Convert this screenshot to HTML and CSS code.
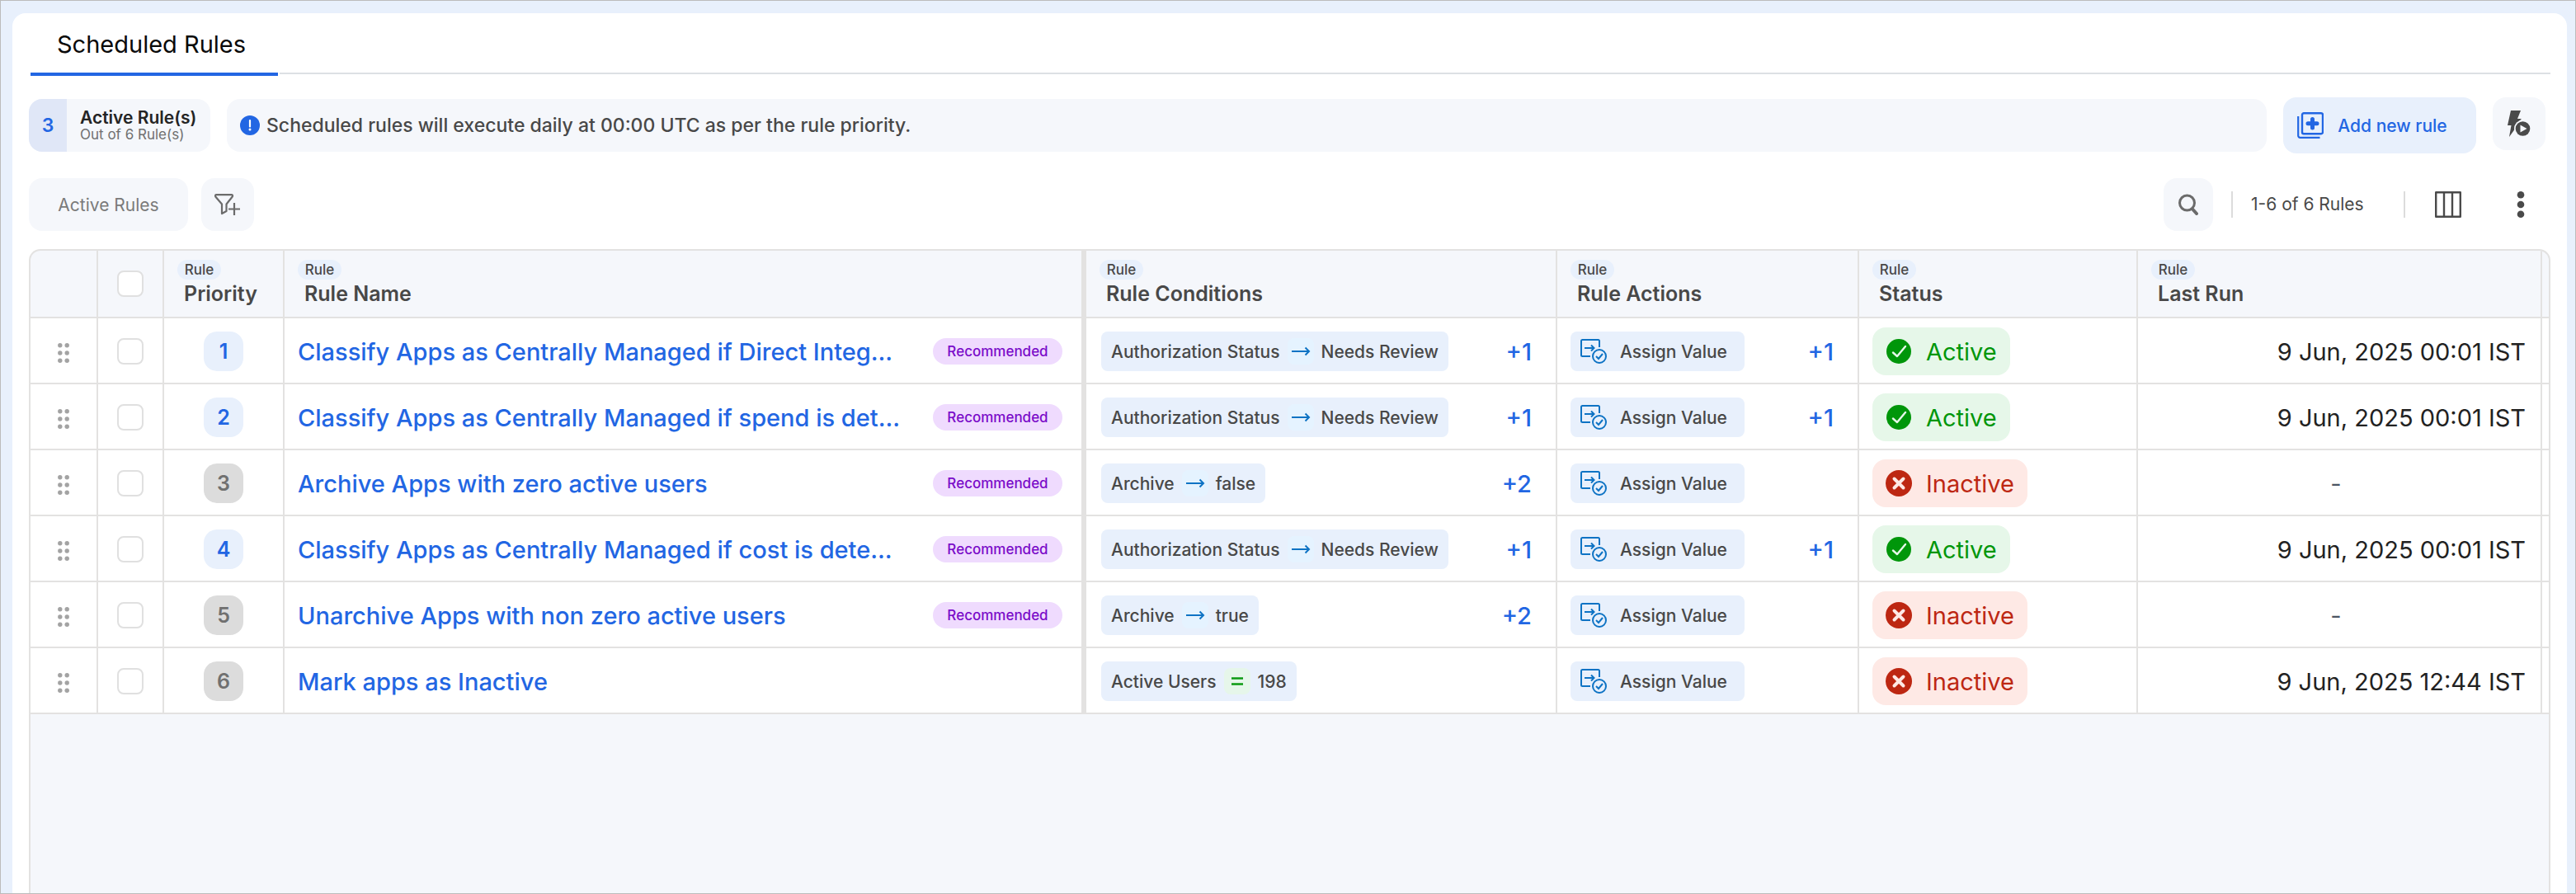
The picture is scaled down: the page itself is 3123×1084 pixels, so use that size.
FILE: index.html
```html
<!DOCTYPE html>
<html lang="en">
<head>
  <meta charset="UTF-8" />
  <meta name="viewport" content="width=device-width, initial-scale=1.0" />
  <title>Scheduled Rules</title>
  <link rel="stylesheet" href="styles.css">
</head>
<body>
<svg class="sprite" aria-hidden="true">
  <symbol id="i-drag" viewBox="0 0 14 24">
    <g fill="#a3a3a3"><circle cx="2.8" cy="2.8" r="2.7"/><circle cx="11.2" cy="2.8" r="2.7"/><circle cx="2.8" cy="12" r="2.7"/><circle cx="11.2" cy="12" r="2.7"/><circle cx="2.8" cy="21.2" r="2.7"/><circle cx="11.2" cy="21.2" r="2.7"/></g>
  </symbol>
  <symbol id="i-arrow" viewBox="0 0 24 24">
    <path d="M1 12H22M17.5 7.5L22 12L17.5 16.5" fill="none" stroke="#0e73c4" stroke-width="2"/>
  </symbol>
  <symbol id="i-equal" viewBox="0 0 24 24">
    <path d="M5 8.5H19M5 15.5H19" fill="none" stroke="#0c9a12" stroke-width="2.4"/>
  </symbol>
  <symbol id="i-assign" viewBox="0 0 32 32">
    <g fill="none" stroke="#0e73c4" stroke-width="2">
      <path d="M23 11V3.5A1.5 1.5 0 0 0 21.5 2H2.5A1.5 1.5 0 0 0 1 3.5V20.5A1.5 1.5 0 0 0 2.5 22H12M5 12H16.5M13 8.5L16.5 12L13 15.5"/>
      <circle cx="23" cy="22" r="8"/>
      <path d="M19 22L22 25L27 19"/>
    </g>
  </symbol>
  <symbol id="i-check" viewBox="0 0 32 32">
    <circle cx="16" cy="16" r="15" fill="#00960a"/>
    <path d="M9 17.5L14 22L24 10" fill="none" stroke="#e6f7e9" stroke-width="2.4" stroke-linecap="round" stroke-linejoin="round"/>
  </symbol>
  <symbol id="i-cross" viewBox="0 0 32 32">
    <circle cx="16" cy="16" r="16" fill="#bd2712"/>
    <path d="M10.5 10.5L21.5 21.5M21.5 10.5L10.5 21.5" fill="none" stroke="#fee9e5" stroke-width="4" stroke-linecap="round"/>
  </symbol>
</svg>

<div class="panel">
  <nav class="tabs">
    <a class="tab" href="#">Scheduled Rules</a>
  </nav>

  <div class="info-row">
    <div class="summary">
      <div class="summary-count">3</div>
      <div class="summary-text">
        <strong>Active Rule(s)</strong>
        <span>Out of 6 Rule(s)</span>
      </div>
    </div>
    <div class="notice">
      <svg width="24" height="24" viewBox="0 0 24 24"><circle cx="12" cy="12" r="12" fill="#2266e3"/><path d="M12 6V13.5" stroke="#fff" stroke-width="2.2" stroke-linecap="round"/><circle cx="12" cy="17" r="1.5" fill="#fff"/></svg>
      <span>Scheduled rules will execute daily at 00:00 UTC as per the rule priority.</span>
    </div>
    <button class="add-button">
      <svg width="32" height="32" viewBox="0 0 32 32"><path d="M1.2 5V28.5A2.3 2.3 0 0 0 3.5 30.8H27.5" fill="none" stroke="#2266e3" stroke-width="2.2"/><rect x="6" y="1.2" width="25" height="25" rx="2" fill="none" stroke="#2266e3" stroke-width="2.4"/><path d="M18.5 8.5V19M13 13.8H24" stroke="#2266e3" stroke-width="5" stroke-linecap="round"/></svg>
      Add new rule
    </button>
    <button class="icon-button" aria-label="Run rules">
      <svg width="28" height="32" viewBox="0 0 28 32"><path d="M4 0H16L12 10H17L11 16L8.5 23L2 32L4.5 18H0Z" fill="#4a4a4a"/><circle cx="18.5" cy="22" r="10.5" fill="#f5f7fb"/><circle cx="18.5" cy="22" r="8.8" fill="#4a4a4a"/><path d="M15.5 17.5L23.5 22L15.5 26.5Z" fill="#f5f7fb"/></svg>
    </button>
  </div>

  <div class="toolbar">
    <button class="filter-chip">Active Rules</button>
    <button class="icon-button" aria-label="Add filter">
      <svg width="32" height="26" viewBox="0 0 32 26"><path d="M2.5 1.2H20.5C22 1.2 22.5 2.5 21.5 3.7L14.5 12.5V21L9 24V12.5L1.5 3.7C.5 2.5 1 1.2 2.5 1.2Z" fill="none" stroke="#6b6b6b" stroke-width="2.2" stroke-linejoin="round"/><path d="M24 11V26M17 18.5H31" stroke="#6b6b6b" stroke-width="2.2"/></svg>
    </button>
    <div class="toolbar-right">
      <button class="icon-button search-button" aria-label="Search">
        <svg width="24" height="26" viewBox="0 0 24 26"><circle cx="10.5" cy="11" r="9" fill="none" stroke="#6b6b6b" stroke-width="3"/><path d="M17 18.5L22 24" stroke="#6b6b6b" stroke-width="4" stroke-linecap="round"/></svg>
      </button>
      <span class="range">1-6 of 6 Rules</span>
      <button class="plain-button" aria-label="Columns">
        <svg width="32" height="32" viewBox="0 0 32 32"><path d="M1.2 1.2H30.8V30.8H1.2ZM11 1V31M21 1V31" fill="none" stroke="#4a4a4a" stroke-width="2.4" stroke-linejoin="round"/></svg>
      </button>
      <button class="plain-button" aria-label="More options">
        <svg width="32" height="32" viewBox="0 0 32 32"><g fill="#4a4a4a"><circle cx="16" cy="4.3" r="4.3"/><circle cx="16" cy="16" r="4.3"/><circle cx="16" cy="27.7" r="4.3"/></g></svg>
      </button>
    </div>
  </div>

  <div class="table-wrap">
    <table>
      <colgroup>
        <col class="col-drag"><col class="col-check"><col class="col-priority"><col class="col-name"><col class="col-conditions"><col class="col-actions"><col class="col-status"><col><col class="col-end">
      </colgroup>
      <thead>
        <tr>
          <th></th>
          <th class="center"><input type="checkbox" aria-label="Select all rules"></th>
          <th><span class="group">Rule</span>Priority</th>
          <th class="pinned"><span class="group">Rule</span>Rule Name</th>
          <th><span class="group">Rule</span>Rule Conditions</th>
          <th><span class="group">Rule</span>Rule Actions</th>
          <th><span class="group">Rule</span>Status</th>
          <th><span class="group">Rule</span>Last Run</th>
          <th></th>
        </tr>
      </thead>
      <tbody>
        <tr>
          <td class="center"><svg class="drag"><use href="#i-drag"/></svg></td>
          <td class="center"><input type="checkbox" aria-label="Select rule 1"></td>
          <td class="center"><span class="priority on">1</span></td>
          <td class="pinned"><div class="cell"><a href="#">Classify Apps as Centrally Managed if Direct Integ...</a><span class="tag">Recommended</span></div></td>
          <td><div class="cell"><span class="chip">Authorization Status <svg class="op"><use href="#i-arrow"/></svg> Needs Review</span><span class="more">+1</span></div></td>
          <td><div class="cell"><span class="chip action"><svg><use href="#i-assign"/></svg>Assign Value</span><span class="more">+1</span></div></td>
          <td><span class="status active"><svg><use href="#i-check"/></svg>Active</span></td>
          <td class="date">9 Jun, 2025 00:01 IST</td>
          <td></td>
        </tr>
        <tr>
          <td class="center"><svg class="drag"><use href="#i-drag"/></svg></td>
          <td class="center"><input type="checkbox" aria-label="Select rule 2"></td>
          <td class="center"><span class="priority on">2</span></td>
          <td class="pinned"><div class="cell"><a href="#">Classify Apps as Centrally Managed if spend is det...</a><span class="tag">Recommended</span></div></td>
          <td><div class="cell"><span class="chip">Authorization Status <svg class="op"><use href="#i-arrow"/></svg> Needs Review</span><span class="more">+1</span></div></td>
          <td><div class="cell"><span class="chip action"><svg><use href="#i-assign"/></svg>Assign Value</span><span class="more">+1</span></div></td>
          <td><span class="status active"><svg><use href="#i-check"/></svg>Active</span></td>
          <td class="date">9 Jun, 2025 00:01 IST</td>
          <td></td>
        </tr>
        <tr>
          <td class="center"><svg class="drag"><use href="#i-drag"/></svg></td>
          <td class="center"><input type="checkbox" aria-label="Select rule 3"></td>
          <td class="center"><span class="priority">3</span></td>
          <td class="pinned"><div class="cell"><a href="#">Archive Apps with zero active users</a><span class="tag">Recommended</span></div></td>
          <td><div class="cell"><span class="chip">Archive <svg class="op"><use href="#i-arrow"/></svg> false</span><span class="more">+2</span></div></td>
          <td><div class="cell"><span class="chip action"><svg><use href="#i-assign"/></svg>Assign Value</span></div></td>
          <td><span class="status inactive"><svg><use href="#i-cross"/></svg>Inactive</span></td>
          <td class="date none">-</td>
          <td></td>
        </tr>
        <tr>
          <td class="center"><svg class="drag"><use href="#i-drag"/></svg></td>
          <td class="center"><input type="checkbox" aria-label="Select rule 4"></td>
          <td class="center"><span class="priority on">4</span></td>
          <td class="pinned"><div class="cell"><a href="#">Classify Apps as Centrally Managed if cost is dete...</a><span class="tag">Recommended</span></div></td>
          <td><div class="cell"><span class="chip">Authorization Status <svg class="op"><use href="#i-arrow"/></svg> Needs Review</span><span class="more">+1</span></div></td>
          <td><div class="cell"><span class="chip action"><svg><use href="#i-assign"/></svg>Assign Value</span><span class="more">+1</span></div></td>
          <td><span class="status active"><svg><use href="#i-check"/></svg>Active</span></td>
          <td class="date">9 Jun, 2025 00:01 IST</td>
          <td></td>
        </tr>
        <tr>
          <td class="center"><svg class="drag"><use href="#i-drag"/></svg></td>
          <td class="center"><input type="checkbox" aria-label="Select rule 5"></td>
          <td class="center"><span class="priority">5</span></td>
          <td class="pinned"><div class="cell"><a href="#">Unarchive Apps with non zero active users</a><span class="tag">Recommended</span></div></td>
          <td><div class="cell"><span class="chip">Archive <svg class="op"><use href="#i-arrow"/></svg> true</span><span class="more">+2</span></div></td>
          <td><div class="cell"><span class="chip action"><svg><use href="#i-assign"/></svg>Assign Value</span></div></td>
          <td><span class="status inactive"><svg><use href="#i-cross"/></svg>Inactive</span></td>
          <td class="date none">-</td>
          <td></td>
        </tr>
        <tr>
          <td class="center"><svg class="drag"><use href="#i-drag"/></svg></td>
          <td class="center"><input type="checkbox" aria-label="Select rule 6"></td>
          <td class="center"><span class="priority">6</span></td>
          <td class="pinned"><div class="cell"><a href="#">Mark apps as Inactive</a></div></td>
          <td><div class="cell"><span class="chip">Active Users <svg class="op equal"><use href="#i-equal"/></svg> 198</span></div></td>
          <td><div class="cell"><span class="chip action"><svg><use href="#i-assign"/></svg>Assign Value</span></div></td>
          <td><span class="status inactive"><svg><use href="#i-cross"/></svg>Inactive</span></td>
          <td class="date">9 Jun, 2025 12:44 IST</td>
          <td></td>
        </tr>
      </tbody>
    </table>
  </div>
</div>
</body>
</html>
```
FILE: styles.css
```css
:root {
  --blue: #2266e3;
  --light-blue: #e8f0fc;
  --grey-bg: #f5f7fb;
  --line: #e3e2e1;
  --text: #484848;
  --muted: #707070;
}
* {
  box-sizing: border-box;
}
body {
  display: flex;
  margin: 0;
  min-height: 100vh;
  padding: 15px 10px 0 14px;
  border: 1px solid #bcbcbc;
  background: var(--light-blue);
  color: var(--text);
  font-family: Inter, "Liberation Sans", sans-serif;
  font-size: 21px;
}
.sprite {
  position: absolute;
  width: 0;
  height: 0;
}
a {
  color: inherit;
  text-decoration: none;
}
button {
  display: flex;
  align-items: center;
  justify-content: center;
  padding: 0;
  border: none;
  background: none;
  color: inherit;
  font: inherit;
  cursor: pointer;
}
.panel {
  flex: 1;
  min-width: 0;
  display: flex;
  flex-direction: column;
  padding: 0 20px;
  background: #fff;
  border-radius: 16px 16px 0 0;
}

/* Tabs */
.tabs {
  display: flex;
  padding-left: 2px;
  height: 76px;
}
.tabs::after {
  content: "";
  flex: 1;
  height: 72px;
  margin-left: 2px;
  border-bottom: 2px solid #dde0e4;
}
.tab {
  width: 300px;
  padding: 18px 32px 0;
  border-bottom: 4px solid var(--blue);
  color: #0a0a0a;
  font-size: 29px;
  line-height: 40px;
  white-space: nowrap;
}

/* Summary and notice */
.info-row {
  display: flex;
  align-items: flex-start;
  margin-top: 26px;
  padding-right: 6px;
}
.summary {
  display: flex;
  width: 220px;
  height: 64px;
  margin: 2px 20px 0 0;
  border-radius: 16px;
  background: var(--grey-bg);
  overflow: hidden;
}
.summary-count {
  width: 46px;
  background: #e0e7f7;
  color: var(--blue);
  font-size: 23px;
  font-weight: 600;
  line-height: 64px;
  text-align: center;
}
.summary-text {
  display: flex;
  flex-direction: column;
  justify-content: center;
  padding-left: 16px;
  white-space: nowrap;
}
.summary-text strong {
  color: #242424;
  font-weight: 600;
  line-height: 22px;
}
.summary-text span {
  color: var(--muted);
  font-size: 17px;
  line-height: 18px;
}
.notice {
  flex: 1;
  display: flex;
  align-items: center;
  gap: 8px;
  height: 64px;
  margin: 2px 20px 0 0;
  padding: 0 16px;
  border-radius: 16px;
  background: var(--grey-bg);
  font-size: 23px;
  font-weight: 500;
}
.add-button {
  gap: 17px;
  height: 68px;
  width: 234px;
  margin-right: 20px;
  padding-right: 18px;
  border-radius: 16px;
  background: var(--light-blue);
  color: var(--blue);
  font-weight: 500;
  white-space: nowrap;
}
.icon-button {
  width: 64px;
  height: 64px;
  border-radius: 16px;
  background: var(--grey-bg);
}

/* Toolbar */
.toolbar {
  display: flex;
  gap: 16px;
  margin-top: 30px;
  margin-bottom: 22px;
}
.filter-chip {
  width: 193px;
  height: 64px;
  border-radius: 16px;
  background: var(--grey-bg);
  color: #7a7a7a;
}
.toolbar-right {
  display: flex;
  align-items: center;
  margin-left: auto;
  padding-right: 20px;
}
.search-button {
  width: 60px;
  margin-right: 22px;
}
.range {
  width: 211px;
  padding-left: 22px;
  border-left: 2px solid #dcdcdc;
  border-right: 2px solid #dcdcdc;
  line-height: 32px;
  white-space: nowrap;
}
.plain-button {
  margin-left: 36px;
}
.plain-button + .plain-button {
  margin-left: 56px;
}

/* Rules table */
.table-wrap {
  flex: 1;
  border: 2px solid var(--line);
  border-bottom: none;
  border-radius: 14px 14px 0 0;
  background: var(--grey-bg);
  overflow-x: auto;
}
table {
  width: 100%;
  border-spacing: 0;
  table-layout: fixed;
}
.col-drag { width: 82px; }
.col-check { width: 80px; }
.col-priority { width: 146px; }
.col-name { width: 972px; }
.col-conditions { width: 571px; }
.col-actions { width: 366px; }
.col-status { width: 338px; }
.col-end { width: 8px; }
th, td {
  padding: 2px 0 0 16px;
  border-right: 2px solid var(--line);
  border-bottom: 2px solid var(--line);
  text-align: left;
  white-space: nowrap;
}
th {
  height: 82px;
  padding: 0 0 0 24px;
  font-size: 25px;
  font-weight: 600;
  line-height: 34px;
}
td {
  height: 80px;
  background: #fff;
}
th:last-child, td:last-child {
  padding: 0;
  border-right: none;
}
.pinned {
  border-right-width: 6px;
}
.pinned + td {
  padding-left: 18px;
}
.center {
  padding-left: 0;
  text-align: center;
}
.group {
  display: block;
  width: 53px;
  margin-left: -8px;
  border-radius: 12px;
  background: var(--light-blue);
  font-size: 17px;
  font-weight: 500;
  line-height: 24px;
  text-align: center;
}
input[type="checkbox"] {
  appearance: none;
  display: block;
  width: 32px;
  height: 32px;
  margin: 0 auto;
  border: 2px solid #e0e0e0;
  border-radius: 8px;
  background: #fff;
}
.drag {
  display: block;
  width: 14px;
  height: 24px;
  margin: 4px auto 0;
}
.priority {
  display: inline-block;
  width: 48px;
  border-radius: 16px;
  background: #dcdcdc;
  color: var(--muted);
  font-size: 25px;
  font-weight: 600;
  line-height: 48px;
}
.priority.on {
  background: var(--light-blue);
  color: var(--blue);
}
.cell {
  display: flex;
  align-items: center;
  justify-content: space-between;
  padding-right: 23px;
}
.cell a {
  color: var(--blue);
  font-size: 29px;
  font-weight: 500;
}
.tag {
  width: 157px;
  border-radius: 16px;
  background: #efdbfe;
  color: #7a0bc9;
  font-size: 17px;
  font-weight: 500;
  line-height: 32px;
  text-align: center;
}
.chip {
  display: flex;
  align-items: center;
  gap: 9px;
  height: 48px;
  padding: 0 12px;
  border-radius: 8px;
  background: var(--light-blue);
  font-weight: 500;
}
.op {
  width: 32px;
  height: 32px;
  padding: 4px;
  border-radius: 8px;
  background: #e5f3ff;
}
.op.equal {
  background: #e6f6ea;
}
.action {
  gap: 16px;
  width: 211px;
}
.action svg {
  width: 32px;
  height: 32px;
}
.more {
  padding-right: 6px;
  color: var(--blue);
  font-size: 29px;
  font-weight: 500;
}
.status {
  display: inline-flex;
  align-items: center;
  gap: 17px;
  height: 58px;
  padding: 0 16px;
  border-radius: 16px;
  font-size: 29px;
  vertical-align: middle;
}
.status svg {
  width: 32px;
  height: 32px;
}
.active {
  background: #e6f7e9;
  color: #00960a;
}
.inactive {
  background: #fee9e5;
  color: #bd2712;
}
.date {
  padding-right: 18px;
  color: #222;
  font-size: 29px;
  text-align: right;
}
.date.none {
  padding-right: 24px;
  color: #4b5563;
  text-align: center;
}
```
